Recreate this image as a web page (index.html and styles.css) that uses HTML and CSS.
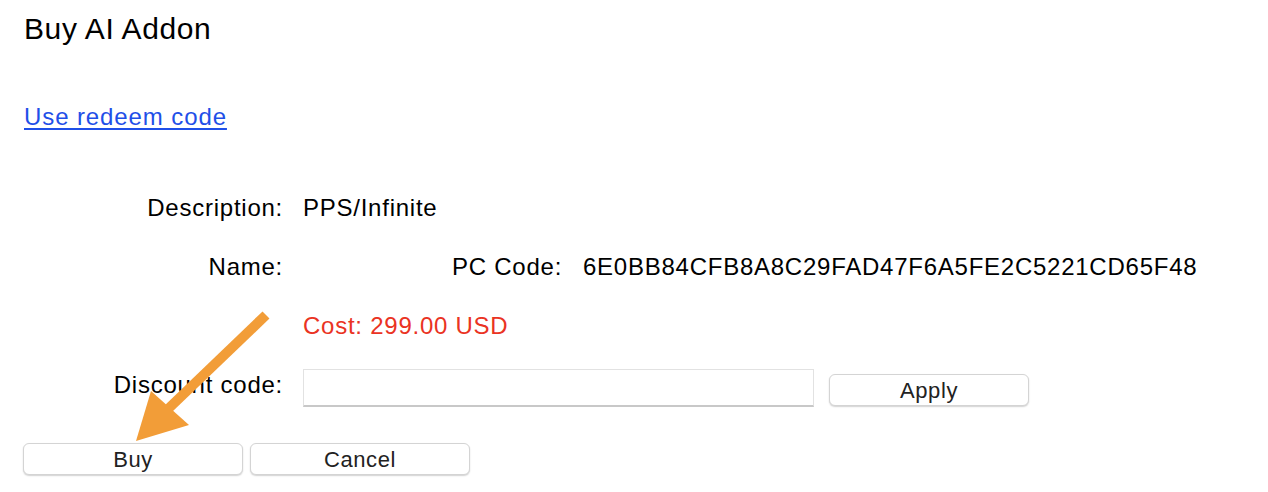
FILE: index.html
```html
<!DOCTYPE html>
<html lang="en">
<head>
<meta charset="utf-8">
<title>Buy AI Addon</title>
<link rel="stylesheet" href="styles.css">
</head>
<body>
<main class="dialog">
  <h1 class="title">Buy AI Addon</h1>
  <a class="redeem" href="#">Use redeem code</a>
  <div class="form">
    <div class="label">Description:</div>
    <div class="value">PPS/Infinite</div>

    <div class="label">Name:</div>
    <div class="value name-row">
      <span class="name-value"></span>
      <span class="pc-label">PC Code:</span>
      <span class="pc-code">6E0BB84CFB8A8C29FAD47F6A5FE2C5221CD65F48</span>
    </div>

    <div class="label"></div>
    <div class="value cost">Cost: 299.00 USD</div>

    <div class="label">Discount code:</div>
    <div class="value discount-row">
      <input class="discount-input" type="text">
      <button class="btn apply">Apply</button>
    </div>
  </div>
  <div class="actions">
    <button class="btn wide">Buy</button>
    <button class="btn wide">Cancel</button>
  </div>
  <svg class="arrow" width="200" height="160" viewBox="0 0 200 160">
    <line x1="168" y1="12" x2="70" y2="106" stroke="#F29D38" stroke-width="10"/>
    <polygon points="38,138 53,88 91,122" fill="#F29D38"/>
  </svg>
</main>
</body>
</html>
```
FILE: styles.css
```css
html, body {
  margin: 0;
  background: #ffffff;
}
body {
  font-family: "Liberation Sans", Arial, Helvetica, sans-serif;
  color: #000;
}
.dialog {
  position: relative;
  width: 1268px;
  height: 492px;
  padding: 12px 0 0 24px;
  box-sizing: border-box;
}
.title {
  margin: 0;
  font-size: 30px;
  font-weight: normal;
  line-height: 34px;
  letter-spacing: 0.6px;
}
.redeem {
  display: inline-block;
  margin-top: 56px;
  font-size: 24px;
  line-height: 30px;
  color: #1f4fe8;
  letter-spacing: 0.9px;
  text-decoration-thickness: 2px;
  text-underline-offset: 3px;
}
.form {
  display: grid;
  grid-template-columns: 259px 1fr;
  column-gap: 20px;
  grid-auto-rows: 59px;
  margin-top: 61px;
  font-size: 24px;
  letter-spacing: 0.75px;
}
.label {
  text-align: right;
  line-height: 30px;
}
.value {
  line-height: 30px;
}
.name-row {
  display: flex;
}
.name-value {
  width: 149px;
}
.pc-label {
  width: 131px;
}
.cost {
  color: #ea3323;
}
.discount-row {
  display: flex;
  align-items: center;
  height: 38px;
  margin-top: -1px;
}
.discount-input {
  width: 511px;
  height: 38px;
  box-sizing: border-box;
  border: 1px solid #e2e2e2;
  border-bottom: 2px solid #c8c8c8;
  background: #fff;
  margin: 0;
  padding: 0 6px;
  font: inherit;
}
.btn {
  font-family: "Liberation Sans", Arial, Helvetica, sans-serif;
  font-size: 22px;
  letter-spacing: 0.6px;
  color: #222;
  background: #fff;
  border: 1px solid #d4d4d4;
  border-radius: 6px;
  box-shadow: 0 1px 1.5px rgba(0,0,0,0.18);
  height: 32px;
  padding: 0;
  line-height: 32px;
}
.apply {
  width: 200px;
  margin-left: 15px;
  margin-top: 4px;
}
.actions {
  display: flex;
  gap: 7px;
  margin-top: 14px;
  margin-left: -1px;
}
.wide {
  width: 220px;
}
.arrow {
  position: absolute;
  left: 98px;
  top: 303px;
}
```
